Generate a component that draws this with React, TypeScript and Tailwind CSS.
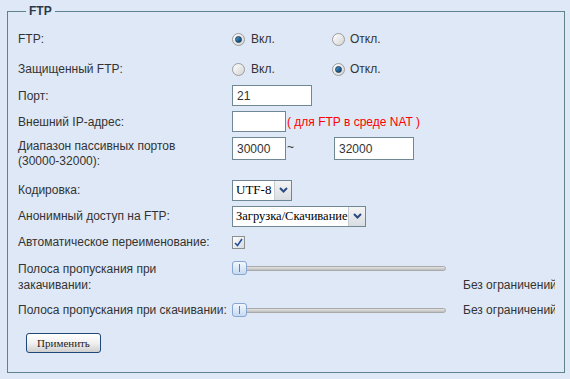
import React from 'react';

const font = { fontFamily: '"Liberation Sans", Arial, sans-serif' };
const serif = { fontFamily: '"Liberation Serif", "Times New Roman", serif' };

function Radio({ checked }: { checked?: boolean }) {
  return (
    <span className="flex h-[13px] w-[13px] items-center justify-center rounded-full border border-[#9c9c9c] bg-gradient-to-br from-white to-[#d4d4d4]">
      {checked && (
        <span className="h-[7px] w-[7px] rounded-full border border-[#1d3f5c] bg-gradient-to-br from-[#4aa0d8] to-[#0d3a66]" />
      )}
    </span>
  );
}

function Arrow() {
  return (
    <span className="flex h-full w-[17px] shrink-0 items-center justify-center border-l border-[#c6ccd2] bg-gradient-to-b from-[#f4f4f4] to-[#d9dde2]">
      <svg width="9" height="6" viewBox="0 0 9 6">
        <path d="M1 1 L4.5 4.5 L8 1" fill="none" stroke="#2b4b80" strokeWidth="2" />
      </svg>
    </span>
  );
}

function Slider() {
  return (
    <div className="flex items-center">
      <div className="z-10 flex h-[14px] w-[15px] items-center justify-center rounded-[3px] border border-[#86a7cf] bg-gradient-to-b from-[#f2f7fd] to-[#c7daf1]">
        <span className="h-[8px] w-[1px] bg-[#5d82b4]" />
      </div>
      <div className="-ml-px h-[5px] w-[200px] rounded-r-full border border-[#a9a9a9] bg-gradient-to-b from-[#e4e4e4] to-[#bdbdbd]" />
    </div>
  );
}

function Row({ label, children, className = '' }: { label: React.ReactNode; children?: React.ReactNode; className?: string }) {
  return (
    <div className={`flex ${className}`}>
      <div className="w-[214px] shrink-0 leading-[16px]">{label}</div>
      <div className="flex items-center">{children}</div>
    </div>
  );
}

export default function App() {
  return (
    <div className="h-[379px] w-[570px] bg-[#dfe8f6] pl-[7px] pt-[2px] text-[12px] text-[#333]" style={font}>
      <fieldset className="h-[371px] w-[558px] border border-[#5f838e] pl-[10px]">
        <legend className="ml-[8px] px-[3px] text-[12px] font-bold text-[#2a3a4a]">FTP</legend>

        <Row label="FTP:" className="mt-[9px] h-[20px] items-center">
          <div className="flex w-[100px] items-center gap-[6px]"><Radio checked /><span>Вкл.</span></div>
          <div className="flex items-center gap-[5px]"><Radio /><span>Откл.</span></div>
        </Row>

        <Row label="Защищенный FTP:" className="mt-[10px] h-[20px] items-center">
          <div className="flex w-[100px] items-center gap-[6px]"><Radio /><span>Вкл.</span></div>
          <div className="flex items-center gap-[5px]"><Radio checked /><span>Откл.</span></div>
        </Row>

        <Row label="Порт:" className="mt-[6px] h-[21px] items-center">
          <div className="flex h-[21px] w-[80px] items-center border border-[#6f8893] bg-white pl-[4px]">21</div>
        </Row>

        <Row label="Внешний IP-адрес:" className="mt-[5px] h-[21px] items-center">
          <div className="h-[21px] w-[54px] border border-[#6f8893] bg-white" />
          <span className="ml-[1px] text-[#ff0000]">( для FTP в среде NAT )</span>
        </Row>

        <Row label={<div className="pt-[2px] leading-[15px]">Диапазон пассивных портов<br />(30000-32000):</div>} className="mt-[5px] h-[34px] items-start">
          <div className="flex h-[23px] w-[54px] items-center border border-[#6f8893] bg-white pl-[4px]">30000</div>
          <span className="ml-[1px] w-[47px] self-start pt-[1px]">~</span>
          <div className="flex h-[23px] w-[80px] items-center border border-[#6f8893] bg-white pl-[4px]">32000</div>
        </Row>

        <Row label="Кодировка:" className="mt-[9px] h-[20px] items-center">
          <div className="flex h-[21px] w-[60px] items-center border border-[#6f8893] bg-white" style={serif}>
            <span className="flex-1 pl-[3px] text-[13px] text-black">UTF-8</span>
            <Arrow />
          </div>
        </Row>

        <Row label="Анонимный доступ на FTP:" className="mt-[6px] h-[20px] items-center">
          <div className="flex h-[21px] w-[134px] items-center border border-[#6f8893] bg-white" style={serif}>
            <span className="flex-1 overflow-hidden whitespace-nowrap pl-[3px] text-[12.5px] text-black">Загрузка/Скачивание</span>
            <Arrow />
          </div>
        </Row>

        <Row label="Автоматическое переименование:" className="mt-[9px] h-[14px] items-center">
          <div className="flex h-[13px] w-[13px] items-center justify-center border border-[#8e8f8f] bg-gradient-to-br from-[#fefefe] to-[#d5dbe4]">
            <svg width="9" height="9" viewBox="0 0 9 9">
              <path d="M1 5 L3.5 7.5 L8 1" fill="none" stroke="#2a4f9a" strokeWidth="1.6" />
            </svg>
          </div>
        </Row>

        <div className="mt-[11px] flex h-[34px]">
          <div className="w-[214px] shrink-0 pt-[1px] leading-[16px]">Полоса пропускания при<br />закачивании:</div>
          <div className="flex w-[231px] flex-col pt-[1px]"><Slider /></div>
          <div className="w-[92px] self-end overflow-hidden whitespace-nowrap pb-[2px] leading-[14px]">Без ограничений</div>
        </div>

        <div className="mt-[8px] flex h-[16px] items-center">
          <div className="w-[214px] shrink-0">Полоса пропускания при скачивании:</div>
          <div className="w-[231px]"><Slider /></div>
          <div className="w-[92px] overflow-hidden whitespace-nowrap">Без ограничений</div>
        </div>

        <button className="ml-[8px] mt-[15px] h-[20px] w-[75px] rounded-[3px] border border-[#1f4777] bg-gradient-to-b from-white via-[#f1f1f1] to-[#cfcfcf] text-[11px] text-[#222]" style={serif}>
          Применить
        </button>
      </fieldset>
    </div>
  );
}
